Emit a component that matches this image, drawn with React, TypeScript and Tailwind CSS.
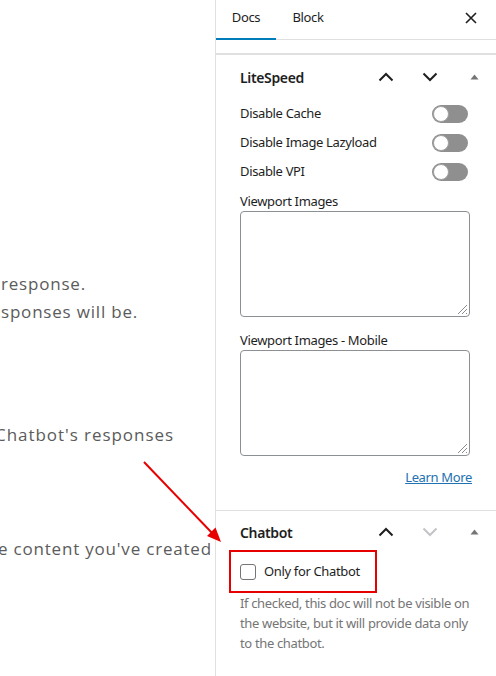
import type { ReactNode } from 'react'

const sans = "font-['Noto_Sans',sans-serif] tracking-[-0.35px]"

function ChevronUp({ muted }: { muted?: boolean }) {
  return (
    <svg width="16" height="10" viewBox="0 0 16 10" fill="none">
      <path d="M1.5 8.5 L8 2 L14.5 8.5" stroke={muted ? '#c3c4c7' : '#1e1e1e'} strokeWidth="2" />
    </svg>
  )
}

function ChevronDown({ muted }: { muted?: boolean }) {
  return (
    <svg width="16" height="10" viewBox="0 0 16 10" fill="none">
      <path d="M1.5 1.5 L8 8 L14.5 1.5" stroke={muted ? '#c3c4c7' : '#1e1e1e'} strokeWidth="2" />
    </svg>
  )
}

function Caret() {
  return (
    <svg width="9" height="6" viewBox="0 0 9 6">
      <path d="M0.5 5.5 L4.5 0.5 L8.5 5.5 Z" fill="#757575" />
    </svg>
  )
}

function PanelHeader({ title, downMuted, className }: { title: string; downMuted?: boolean; className: string }) {
  return (
    <div className={`flex items-center ${className}`}>
      <span className="flex-1 pl-6 text-[14px] font-semibold text-[#1e1e1e]">{title}</span>
      <span className="w-[44px] flex justify-center"><ChevronUp /></span>
      <span className="w-[44px] flex justify-center"><ChevronDown muted={downMuted} /></span>
      <span className="w-[44px] flex justify-center"><Caret /></span>
    </div>
  )
}

function Toggle() {
  return (
    <span className="mr-1 w-[36px] h-[18px] rounded-full bg-[#8f8f8f] flex items-center">
      <span className="ml-[1px] w-[16px] h-[16px] rounded-full bg-white border border-[#a0a0a0]" />
    </span>
  )
}

function ToggleRow({ label }: { label: string }) {
  return (
    <div className="h-[29px] flex items-center justify-between">
      <span>{label}</span>
      <Toggle />
    </div>
  )
}

function Area() {
  return (
    <div className="relative w-[230px] h-[106px] rounded-[4px] border border-[#8c8f94] bg-white">
      <svg className="absolute right-[1px] bottom-[1px]" width="12" height="12" viewBox="0 0 12 12">
        <path d="M11 2 L2 11 M11 6 L6 11 M11 10 L10 11" stroke="#8c8c8c" strokeWidth="1" />
      </svg>
    </div>
  )
}

function Line({ children, className }: { children: ReactNode; className: string }) {
  return <div className={`h-[28px] leading-[28px] whitespace-nowrap ${className}`}>{children}</div>
}

export default function App() {
  return (
    <div className="relative w-[496px] h-[676px] flex bg-white overflow-hidden">
      {/* page content behind the sidebar */}
      <div className="w-[215px] shrink-0 overflow-hidden text-[17px] tracking-[0.8px] text-[#5b5b5b] font-['Open_Sans',sans-serif]">
        <Line className="mt-[270px] ml-[1px]">response.</Line>
        <Line className="ml-[1px]">sponses will be.</Line>
        <Line className="mt-[95px] -ml-[5px] tracking-[0.95px]">Chatbot's responses</Line>
        <Line className="mt-[86px] -ml-[2px]">e content you've created</Line>
      </div>

      {/* sidebar */}
      <div className={`w-[281px] min-w-0 shrink-0 border-l border-[#e0e0e0] text-[13px] text-[#1e1e1e] ${sans}`}>
        <div className="h-[40px] flex shadow-[inset_0_-1px_0_#e0e0e0]">
          <button className="w-[60px] h-[40px] pb-[4px] shadow-[inset_0_-2px_0_#007cba]">Docs</button>
          <button className="w-[64px] h-[40px] pb-[4px]">Block</button>
          <div className="flex-1" />
          <button className="w-[50px] h-[40px] pb-[5px] flex items-center justify-center">
            <svg width="12" height="12" viewBox="0 0 12 12">
              <path d="M1 1 L11 11 M11 1 L1 11" stroke="#1e1e1e" strokeWidth="1.6" />
            </svg>
          </button>
        </div>

        <div className="mt-[13px] h-[2px] bg-[#e0e0e0]" />

        <PanelHeader title="LiteSpeed" className="h-[44px]" />
        <div className="px-6">
          <ToggleRow label="Disable Cache" />
          <ToggleRow label="Disable Image Lazyload" />
          <ToggleRow label="Disable VPI" />
          <div className="mt-[5px] leading-[20px]">Viewport Images</div>
          <Area />
          <div className="mt-[13px] leading-[20px]">Viewport Images - Mobile</div>
          <Area />
          <div className="mt-[11px] leading-[20px] text-right">
            <a className="text-[#2271b1] underline">Learn More</a>
          </div>
        </div>

        <div className="mt-[23px] h-[1px] bg-[#e0e0e0]" />

        <PanelHeader title="Chatbot" downMuted className="h-[39px] pt-[3px]" />
        <div className="px-6">
          <div className="-ml-[11px] w-[148px] h-[43px] border-2 border-[#e60000] pl-[9px] flex items-center gap-2">
            <span className="w-[16px] h-[16px] rounded-[3px] border border-[#757575] bg-white" />
            <span className="whitespace-nowrap">Only for Chatbot</span>
          </div>
          <p className="leading-[20px] text-[#757575] whitespace-nowrap">
            If checked, this doc will not be visible on
            <br />
            the website, but it will provide data only
            <br />
            to the chatbot.
          </p>
        </div>
      </div>

      {/* annotation arrow */}
      <svg className="absolute inset-0 pointer-events-none" width="496" height="676" viewBox="0 0 496 676">
        <line x1="144" y1="462" x2="213" y2="534" stroke="#e60000" strokeWidth="2" />
        <polygon points="221,542 207,536 215.5,527.5" fill="#e60000" />
      </svg>
    </div>
  )
}
